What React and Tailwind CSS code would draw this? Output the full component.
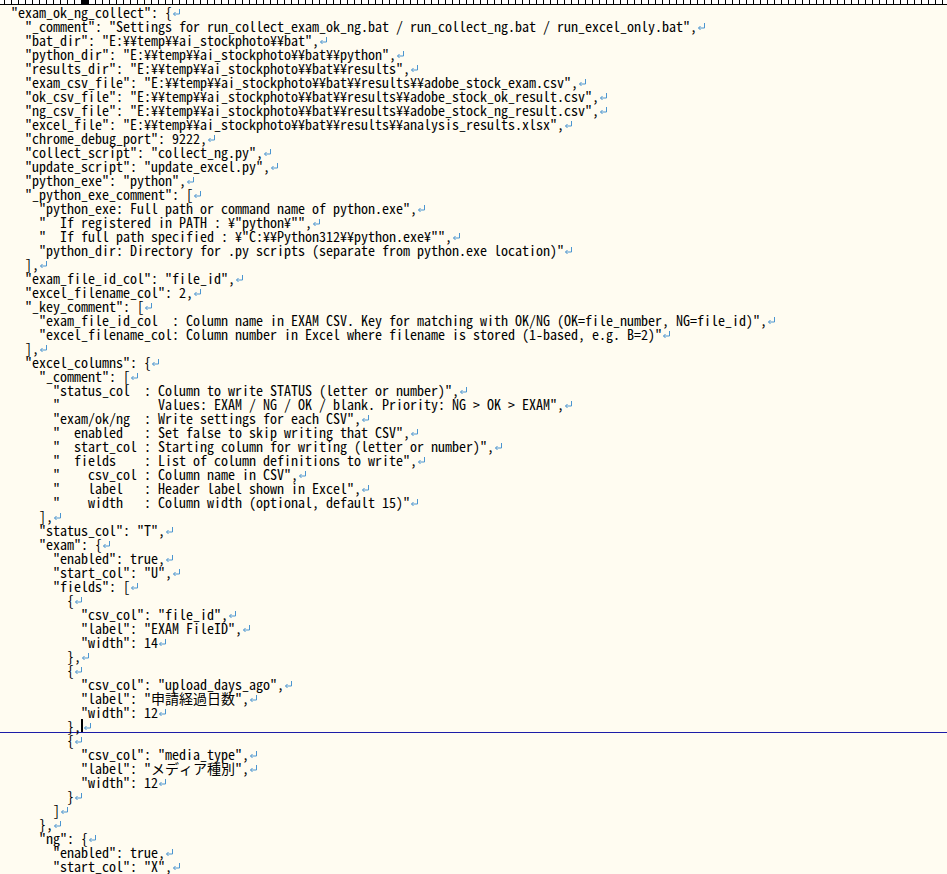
import React from 'react'

const lines = [
  '"exam_ok_ng_collect": {',
  '  "_comment": "Settings for run_collect_exam_ok_ng.bat / run_collect_ng.bat / run_excel_only.bat",',
  '  "bat_dir": "E:¥¥temp¥¥ai_stockphoto¥¥bat",',
  '  "python_dir": "E:¥¥temp¥¥ai_stockphoto¥¥bat¥¥python",',
  '  "results_dir": "E:¥¥temp¥¥ai_stockphoto¥¥bat¥¥results",',
  '  "exam_csv_file": "E:¥¥temp¥¥ai_stockphoto¥¥bat¥¥results¥¥adobe_stock_exam.csv",',
  '  "ok_csv_file": "E:¥¥temp¥¥ai_stockphoto¥¥bat¥¥results¥¥adobe_stock_ok_result.csv",',
  '  "ng_csv_file": "E:¥¥temp¥¥ai_stockphoto¥¥bat¥¥results¥¥adobe_stock_ng_result.csv",',
  '  "excel_file": "E:¥¥temp¥¥ai_stockphoto¥¥bat¥¥results¥¥analysis_results.xlsx",',
  '  "chrome_debug_port": 9222,',
  '  "collect_script": "collect_ng.py",',
  '  "update_script": "update_excel.py",',
  '  "python_exe": "python",',
  '  "_python_exe_comment": [',
  '    "python_exe: Full path or command name of python.exe",',
  '    "  If registered in PATH : ¥"python¥"",',
  '    "  If full path specified : ¥"C:¥¥Python312¥¥python.exe¥"",',
  '    "python_dir: Directory for .py scripts (separate from python.exe location)"',
  '  ],',
  '  "exam_file_id_col": "file_id",',
  '  "excel_filename_col": 2,',
  '  "_key_comment": [',
  '    "exam_file_id_col  : Column name in EXAM CSV. Key for matching with OK/NG (OK=file_number, NG=file_id)",',
  '    "excel_filename_col: Column number in Excel where filename is stored (1-based, e.g. B=2)"',
  '  ],',
  '  "excel_columns": {',
  '    "_comment": [',
  '      "status_col  : Column to write STATUS (letter or number)",',
  '      "              Values: EXAM / NG / OK / blank. Priority: NG > OK > EXAM",',
  '      "exam/ok/ng  : Write settings for each CSV",',
  '      "  enabled   : Set false to skip writing that CSV",',
  '      "  start_col : Starting column for writing (letter or number)",',
  '      "  fields    : List of column definitions to write",',
  '      "    csv_col : Column name in CSV",',
  '      "    label   : Header label shown in Excel",',
  '      "    width   : Column width (optional, default 15)"',
  '    ],',
  '    "status_col": "T",',
  '    "exam": {',
  '      "enabled": true,',
  '      "start_col": "U",',
  '      "fields": [',
  '        {',
  '          "csv_col": "file_id",',
  '          "label": "EXAM FileID",',
  '          "width": 14',
  '        },',
  '        {',
  '          "csv_col": "upload_days_ago",',
  '          "label": "申請経過日数",',
  '          "width": 12',
  '        },',
  '        {',
  '          "csv_col": "media_type",',
  '          "label": "メディア種別",',
  '          "width": 12',
  '        }',
  '      ]',
  '    },',
  '    "ng": {',
  '      "enabled": true,',
  '      "start_col": "X",',
  '      "fields": [',
]

// line index that holds the caret
const CURSOR_LINE = 51

function ReturnMark() {
  return (
    <svg width="9" height="14" viewBox="0 0 9 14" className="inline-block align-top">
      <path d="M7.5 4 V9 H1.5 M3.5 7 L1.5 9 L3.5 11" fill="none" stroke="#4b95d0" strokeWidth="1" />
    </svg>
  )
}

function Ruler() {
  return (
    <div className="relative h-[5px] bg-white border-b border-black flex pl-[4px] overflow-hidden">
      {Array.from({ length: 136 }).map((_, i) => (
        <div key={i} className="w-[7px] h-full shrink-0 border-l border-black" />
      ))}
      <div className="absolute left-[81px] top-0 w-[7px] h-[5px] bg-black" />
    </div>
  )
}

export default function App() {
  return (
    <div className="w-[947px] h-[874px] overflow-hidden bg-[#fffcf1] text-black font-['Noto_Sans_Mono_CJK_JP','Noto_Sans_Mono','DejaVu_Sans_Mono',monospace] text-[14px] leading-[14px]">
      <Ruler />
      <div>
        {lines.map((line, i) => (
          <div
            key={i}
            className={
              i === CURSOR_LINE
                ? 'h-[14px] pl-[11px] whitespace-pre border-b border-[#1c1ca8]'
                : 'h-[14px] pl-[11px] whitespace-pre'
            }
          >
            {line}
            {i === CURSOR_LINE && (
              <span className="inline-block align-top w-[2px] h-[13px] bg-black" />
            )}
            {i < lines.length - 1 && <ReturnMark />}
          </div>
        ))}
      </div>
    </div>
  )
}
